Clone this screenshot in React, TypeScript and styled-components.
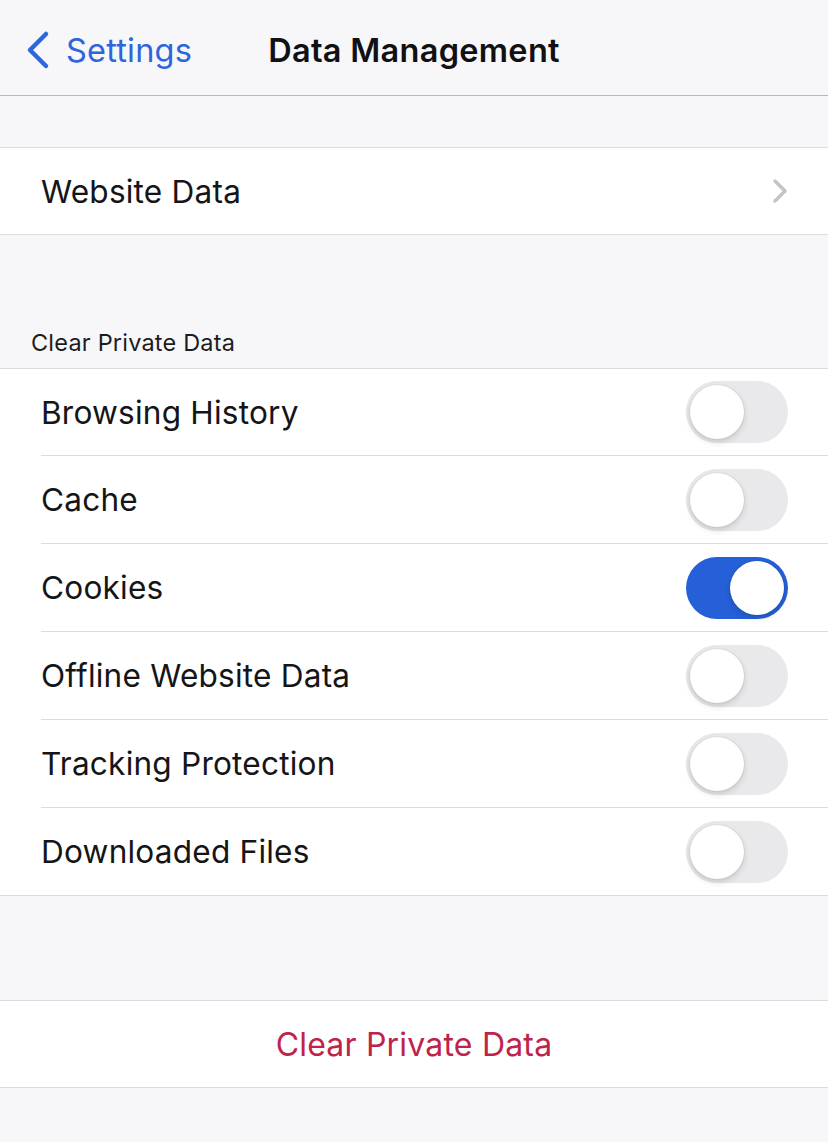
import React, { useState } from 'react'
import styled, { createGlobalStyle } from 'styled-components'

const GlobalStyle = createGlobalStyle`
  html, body {
    margin: 0;
    padding: 0;
    background: #f7f7f9;
  }
  body {
    font-family: Inter, "Noto Sans", "Liberation Sans", sans-serif;
    -webkit-font-smoothing: antialiased;
  }
`

const Page = styled.div`
  width: 828px;
  min-height: 1142px;
  background: #f7f7f9;
  display: flex;
  flex-direction: column;
`

const NavBar = styled.div`
  height: 96px;
  padding-top: 5px;
  box-sizing: border-box;
  border-bottom: 1px solid #b9b9bd;
  display: grid;
  grid-template-columns: 1fr auto 1fr;
  align-items: center;
  background: #f7f7f9;
`

const BackButton = styled.button`
  display: flex;
  align-items: center;
  gap: 16px;
  padding: 0 0 0 26px;
  border: none;
  background: none;
  color: #2d65dc;
  font-family: inherit;
  font-size: 32.5px;
  letter-spacing: 0.2px;
  cursor: pointer;
  justify-self: start;
`

const NavTitle = styled.div`
  font-size: 32.5px;
  font-weight: 600;
  color: #111113;
  letter-spacing: 0.3px;
`

const Spacer = styled.div<{ $h: number }>`
  height: ${p => p.$h}px;
`

const SectionHeader = styled.div`
  padding: 0 0 11px 31px;
  font-size: 23.5px;
  color: #1c1c1e;
  letter-spacing: 0.2px;
`

const Group = styled.div`
  background: #fff;
  border-top: 1px solid #dcdce0;
  border-bottom: 1px solid #dcdce0;
`

const Row = styled.div<{ $divider?: boolean }>`
  height: ${p => (p.$divider ? 88 : 86)}px;
  margin-left: 41px;
  padding-right: 40px;
  display: flex;
  align-items: center;
  justify-content: space-between;
  border-top: ${p => (p.$divider ? '1px solid #dcdce0' : 'none')};
  box-sizing: border-box;
`

const FullRow = styled.button`
  width: 100%;
  height: 86px;
  border: none;
  background: #fff;
  display: flex;
  align-items: center;
  justify-content: center;
  font-family: inherit;
  font-size: 32px;
  letter-spacing: 0.2px;
  color: #c0234a;
  cursor: pointer;
`

const Label = styled.span`
  font-size: 31.6px;
  color: #151517;
  letter-spacing: 0.2px;
`

const Track = styled.button<{ $on: boolean }>`
  position: relative;
  width: 102px;
  height: 62px;
  border-radius: 31px;
  border: none;
  padding: 0;
  background: ${p => (p.$on ? '#2560d8' : '#e9e9eb')};
  cursor: pointer;
  flex-shrink: 0;
`

const Knob = styled.span<{ $on: boolean }>`
  position: absolute;
  top: 4px;
  left: ${p => (p.$on ? '44px' : '4px')};
  width: 54px;
  height: 54px;
  border-radius: 50%;
  background: #fff;
  box-shadow: 0 3px 6px rgba(0, 0, 0, 0.15), 0 0 0 1px rgba(0, 0, 0, 0.04);
`

const Toggle: React.FC<{ on: boolean; onChange: () => void }> = ({ on, onChange }) => (
  <Track $on={on} onClick={onChange}>
    <Knob $on={on} />
  </Track>
)

const items = [
  'Browsing History',
  'Cache',
  'Cookies',
  'Offline Website Data',
  'Tracking Protection',
  'Downloaded Files',
]

export default function App() {
  const [state, setState] = useState<Record<string, boolean>>({ Cookies: true })

  return (
    <Page>
      <GlobalStyle />
      <NavBar>
        <BackButton>
          <svg width="24" height="40" viewBox="0 0 24 40">
            <path d="M20 4 L4 20 L20 36" fill="none" stroke="#2d65dc" strokeWidth="4.5" strokeLinecap="round" strokeLinejoin="round" />
          </svg>
          Settings
        </BackButton>
        <NavTitle>Data Management</NavTitle>
        <div />
      </NavBar>

      <Spacer $h={51} />
      <Group>
        <Row>
          <Label>Website Data</Label>
          <svg width="16" height="26" viewBox="0 0 16 26">
            <path d="M3 3 L13 13 L3 23" fill="none" stroke="#c4c4c7" strokeWidth="3.5" strokeLinecap="round" strokeLinejoin="round" />
          </svg>
        </Row>
      </Group>

      <Spacer $h={93} />
      <SectionHeader>Clear Private Data</SectionHeader>
      <Group>
        {items.map((name, i) => (
          <Row key={name} $divider={i > 0}>
            <Label>{name}</Label>
            <Toggle
              on={!!state[name]}
              onChange={() => setState(s => ({ ...s, [name]: !s[name] }))}
            />
          </Row>
        ))}
      </Group>

      <Spacer $h={104} />
      <Group>
        <FullRow>Clear Private Data</FullRow>
      </Group>
    </Page>
  )
}
